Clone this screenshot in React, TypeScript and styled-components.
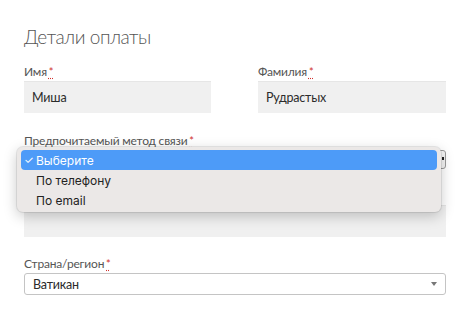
import React from 'react'
import styled, { createGlobalStyle } from 'styled-components'

const Global = createGlobalStyle`
  html, body {
    margin: 0;
    padding: 0;
    background: #ffffff;
  }
  body {
    font-family: Lato, "Open Sans", sans-serif;
  }
`

type FieldProps = {
  label: string,
  children: React.ReactNode
}

const Field = ({ label, children }: FieldProps) => (
  <FieldBox>
    <Label>
      {label} <Req title="required">*</Req>
    </Label>
    {children}
  </FieldBox>
)

export const App = () => {
  return (
    <Page>
      <Global />
      <Title>Детали оплаты</Title>

      <Row>
        <Field label="Имя">
          <Input>Миша</Input>
        </Field>
        <Field label="Фамилия">
          <Input>Рудрастых</Input>
        </Field>
      </Row>

      <Field label="Предпочитаемый метод связи">
        <SelectWrap>
          <NativeSelect>
            <Caret />
          </NativeSelect>
          <Menu>
            <MenuItem active>
              <Check>✓</Check>Выберите
            </MenuItem>
            <MenuItem>По телефону</MenuItem>
            <MenuItem>По email</MenuItem>
          </Menu>
        </SelectWrap>
      </Field>

      <Field label="Название компании">
        <Input />
      </Field>

      <Field label="Страна/регион">
        <CountrySelect>
          Ватикан
          <Arrow />
        </CountrySelect>
      </Field>
    </Page>
  )
}

export default App

const Page = styled.div`
  width: 422px;
  padding: 25px 0 0 24px;
  display: flex;
  flex-direction: column;
`

const Title = styled.h3`
  margin: 0 0 15px;
  font-weight: 300;
  font-size: 19px;
  line-height: 24px;
  letter-spacing: -0.4px;
  color: #555555;
`

const Row = styled.div`
  display: grid;
  grid-template-columns: 187px 188px;
  column-gap: 47px;
  margin-bottom: 20px;
`

const FieldBox = styled.div`
  display: flex;
  flex-direction: column;
  gap: 1px;
  margin-bottom: 19px;

  ${Row} & {
    margin-bottom: 0;
  }
`

const Label = styled.label`
  font-size: 12px;
  line-height: 16px;
  letter-spacing: -0.2px;
  color: #555555;
`

const Req = styled.abbr`
  color: #d0312d;
  font-size: 11px;
  text-decoration: underline dotted;
  text-underline-offset: 2px;
  margin-left: -1px;
`

const Input = styled.div`
  height: 32px;
  box-sizing: border-box;
  padding: 0 8px;
  background: #f0f0f0;
  border-top: 1px solid #e6e6e6;
  display: flex;
  align-items: center;
  font-size: 12.5px;
  letter-spacing: -0.2px;
  color: #2b2b2b;
`

const SelectWrap = styled.div`
  position: relative;
`

const NativeSelect = styled.div`
  height: 19px;
  box-sizing: border-box;
  border: 1px solid #9a9a9a;
  border-radius: 3px;
  background: #f4f4f4;
  position: relative;
`

const Caret = styled.span`
  position: absolute;
  right: 1px;
  top: 6px;
  width: 2px;
  height: 3px;
  background: #222222;
`

const Menu = styled.div`
  position: absolute;
  left: -7px;
  top: -3px;
  width: 424px;
  height: 65px;
  box-sizing: border-box;
  padding: 3px 4px;
  background: #ebe8e7;
  border-radius: 6px;
  box-shadow: 0 0 0 1px rgba(0, 0, 0, 0.08), 0 4px 14px rgba(0, 0, 0, 0.22);
  z-index: 2;
`

const MenuItem = styled.div<{ active?: boolean }>`
  height: 20px;
  padding-left: 15px;
  display: flex;
  align-items: center;
  position: relative;
  border-radius: 4px;
  font-family: Inter, "Liberation Sans", sans-serif;
  font-size: 12px;
  color: ${p => (p.active ? '#ffffff' : '#222222')};
  background: ${p => (p.active ? '#4d9bf8' : 'transparent')};
`

const Check = styled.span`
  position: absolute;
  left: 3px;
  font-size: 11px;
`

const CountrySelect = styled.div`
  height: 22px;
  box-sizing: border-box;
  padding: 0 8px;
  border: 1px solid #c4c4c4;
  border-radius: 3px;
  background: #ffffff;
  display: flex;
  align-items: center;
  justify-content: space-between;
  font-size: 12.5px;
  letter-spacing: -0.2px;
  color: #2b2b2b;
`

const Arrow = styled.span`
  width: 0;
  height: 0;
  border-left: 3.5px solid transparent;
  border-right: 3.5px solid transparent;
  border-top: 4px solid #777777;
`
